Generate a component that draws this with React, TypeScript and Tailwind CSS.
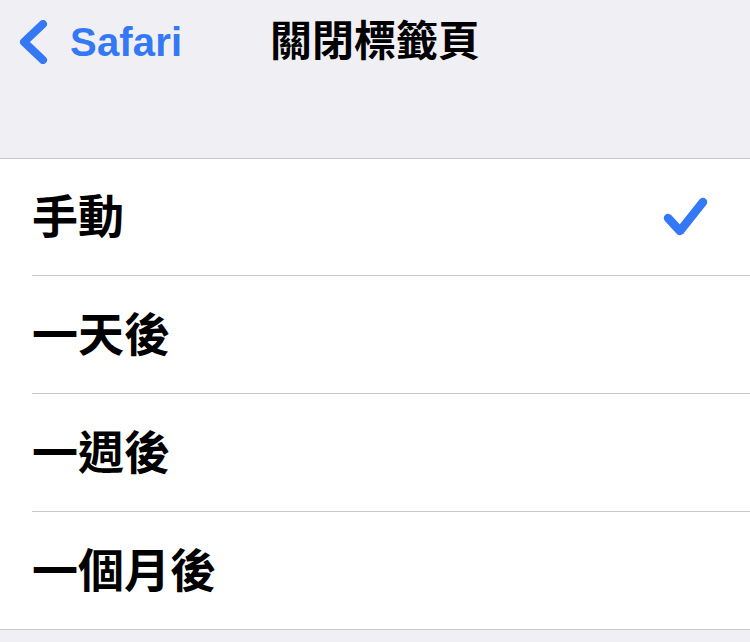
const options = ["手動", "一天後", "一週後", "一個月後"];

function Chevron() {
  return (
    <svg width="34" height="44" viewBox="0 0 34 44" fill="none">
      <path d="M27 4 L8 22 L27 40" stroke="#3478f6" strokeWidth="8" strokeLinecap="round" strokeLinejoin="round" />
    </svg>
  );
}

function Check() {
  return (
    <svg width="48" height="42" viewBox="0 0 48 42" fill="none">
      <path d="M6 22 L18 35 L41 6" stroke="#3478f6" strokeWidth="8.5" strokeLinecap="round" strokeLinejoin="round" />
    </svg>
  );
}

export default function App() {
  const selected = 0;
  return (
    <div
      className="w-[750px] h-[642px] overflow-hidden bg-[#efeff4]"
      style={{ fontFamily: '"Liberation Sans", "Noto Sans CJK TC", sans-serif' }}
    >
      <header className="grid h-[84px] grid-cols-[1fr_auto_1fr] items-center">
        <div className="flex items-center pl-[16px]">
          <Chevron />
          <span className="ml-[20px] text-[40px] font-bold leading-none text-[#3478f6] tracking-[0.2px]">Safari</span>
        </div>
        <h1 className="text-[42px] font-bold leading-none text-black">關閉標籤頁</h1>
        <div />
      </header>

      <div className="mt-[74px] border-y border-[#c8c7cc] bg-white">
        {options.map((label, i) => {
          const last = i === options.length - 1;
          return (
            <div key={label} className="pl-[32px]">
              <div
                className={
                  "flex items-center justify-between pr-[40px] " +
                  (i === 0 || last ? "h-[117px] " : "h-[118px] ") +
                  (last ? "" : "border-b border-[#c8c7cc]")
                }
              >
                <span className="text-[46px] font-bold leading-none text-black">{label}</span>
                {i === selected ? <Check /> : null}
              </div>
            </div>
          );
        })}
      </div>
    </div>
  );
}
